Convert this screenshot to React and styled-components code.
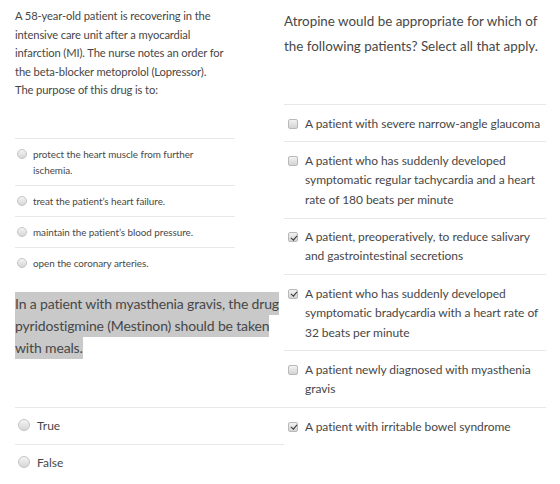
import React from "react"
import styled, { createGlobalStyle } from "styled-components"

const GlobalStyle = createGlobalStyle`
  html, body {
    margin: 0;
    padding: 0;
    background: #fff;
  }
  body {
    font-family: Lato, "Open Sans", sans-serif;
    color: #474747;
  }
`

const Page = styled.div`
  width: 560px;
  height: 484px;
  overflow: hidden;
  display: flex;
  padding-left: 15px;
  box-sizing: border-box;
`

const LeftColumn = styled.div`
  width: 269px;
  display: flex;
  flex-direction: column;
`

const RightColumn = styled.div`
  width: 262px;
  display: flex;
  flex-direction: column;
`

const Question = styled.div`
  width: ${p => p.$width}px;
  font-size: ${p => p.$size}px;
  line-height: ${p => p.$lh}px;
  letter-spacing: ${p => p.$ls || 0}px;
  padding-top: ${p => p.$top}px;
  height: ${p => p.$height}px;
  box-sizing: border-box;
`

const Highlight = styled.span`
  background: #c9c9c9;
  padding: 3px 0;
  -webkit-box-decoration-break: clone;
  box-decoration-break: clone;
`

const OptionList = styled.div`
  width: ${p => p.$width}px;
  border-top: 1px solid #e8e8e8;
`

const Option = styled.div`
  display: flex;
  align-items: flex-start;
  gap: ${p => p.$gap}px;
  padding: ${p => p.$pad}px ${p => p.$right || 0}px ${p => p.$pad}px ${p => p.$indent}px;
  font-size: ${p => p.$size}px;
  line-height: ${p => p.$lh}px;
  letter-spacing: ${p => p.$ls || 0}px;
  border-bottom: ${p => (p.$last ? "none" : "1px solid #e8e8e8")};
`

const Radio = styled.span`
  flex: none;
  width: ${p => p.$d}px;
  height: ${p => p.$d}px;
  margin-top: ${p => p.$mt}px;
  border-radius: 50%;
  box-sizing: border-box;
  border: 1px solid #c4c4c4;
  background: linear-gradient(#f4f4f4, #d6d6d6);
`

const Checkbox = styled.span`
  flex: none;
  position: relative;
  width: 10px;
  height: 10px;
  margin-top: 5px;
  border-radius: 2px;
  box-sizing: border-box;
  border: 1px solid #b9b9b9;
  background: linear-gradient(#f2f2f2, #d4d4d4);

  ${p => p.$checked && `
    &::after {
      content: "";
      position: absolute;
      left: 2.5px;
      top: 0.5px;
      width: 2.5px;
      height: 5px;
      border: solid #333;
      border-width: 0 1.6px 1.6px 0;
      transform: rotate(40deg);
    }
  `}
`

const leftOptions = [
  "protect the heart muscle from further ischemia.",
  "treat the patient’s heart failure.",
  "maintain the patient’s blood pressure.",
  "open the coronary arteries.",
]

const rightOptions = [
  { text: "A patient with severe narrow-angle glaucoma", checked: false },
  { text: "A patient who has suddenly developed symptomatic regular tachycardia and a heart rate of 180 beats per minute", checked: false },
  { text: "A patient, preoperatively, to reduce salivary and gastrointestinal secretions", checked: true },
  { text: "A patient who has suddenly developed symptomatic bradycardia with a heart rate of 32 beats per minute", checked: true },
  { text: "A patient newly diagnosed with myasthenia gravis", checked: false },
  { text: "A patient with irritable bowel syndrome", checked: true },
]

export default function App() {
  return (
    <Page>
      <GlobalStyle />
      <LeftColumn>
        <Question $width={210} $size={11.2} $ls={-0.12} $lh={18.5} $top={7} $height={138}>
          A 58-year-old patient is recovering in the intensive care unit after a myocardial
          infarction (MI). The nurse notes an order for the beta-blocker metoprolol (Lopressor).
          The purpose of this drug is to:
        </Question>
        <OptionList $width={220}>
          {leftOptions.map((o, i) => (
            <Option key={o} $gap={6} $pad={7} $indent={2} $right={28} $size={9.9} $ls={-0.05} $lh={16} $last={i === leftOptions.length - 1}>
              <Radio $d={10} $mt={3} />
              <span>{o}</span>
            </Option>
          ))}
        </OptionList>
        <Question $width={272} $size={14} $ls={-0.15} $lh={22} $top={15} $height={129}>
          <Highlight>
            In a patient with myasthenia gravis, the drug pyridostigmine (Mestinon) should be taken with meals.
          </Highlight>
        </Question>
        <OptionList $width={269}>
          {["True", "False"].map((o, i) => (
            <Option key={o} $gap={7} $pad={9} $indent={3} $size={12} $lh={18} $last={i === 1}>
              <Radio $d={12} $mt={2} />
              <span>{o}</span>
            </Option>
          ))}
        </OptionList>
      </LeftColumn>
      <RightColumn>
        <Question $width={262} $size={13.4} $lh={25} $top={9} $height={104}>
          Atropine would be appropriate for which of the following patients? Select all that apply.
        </Question>
        <OptionList $width={262}>
          {rightOptions.map((o, i) => (
            <Option key={o.text} $gap={7} $pad={8.6} $indent={4} $size={12} $ls={-0.05} $lh={19.3} $last={i === rightOptions.length - 1}>
              <Checkbox $checked={o.checked} />
              <span>{o.text}</span>
            </Option>
          ))}
        </OptionList>
      </RightColumn>
    </Page>
  )
}
